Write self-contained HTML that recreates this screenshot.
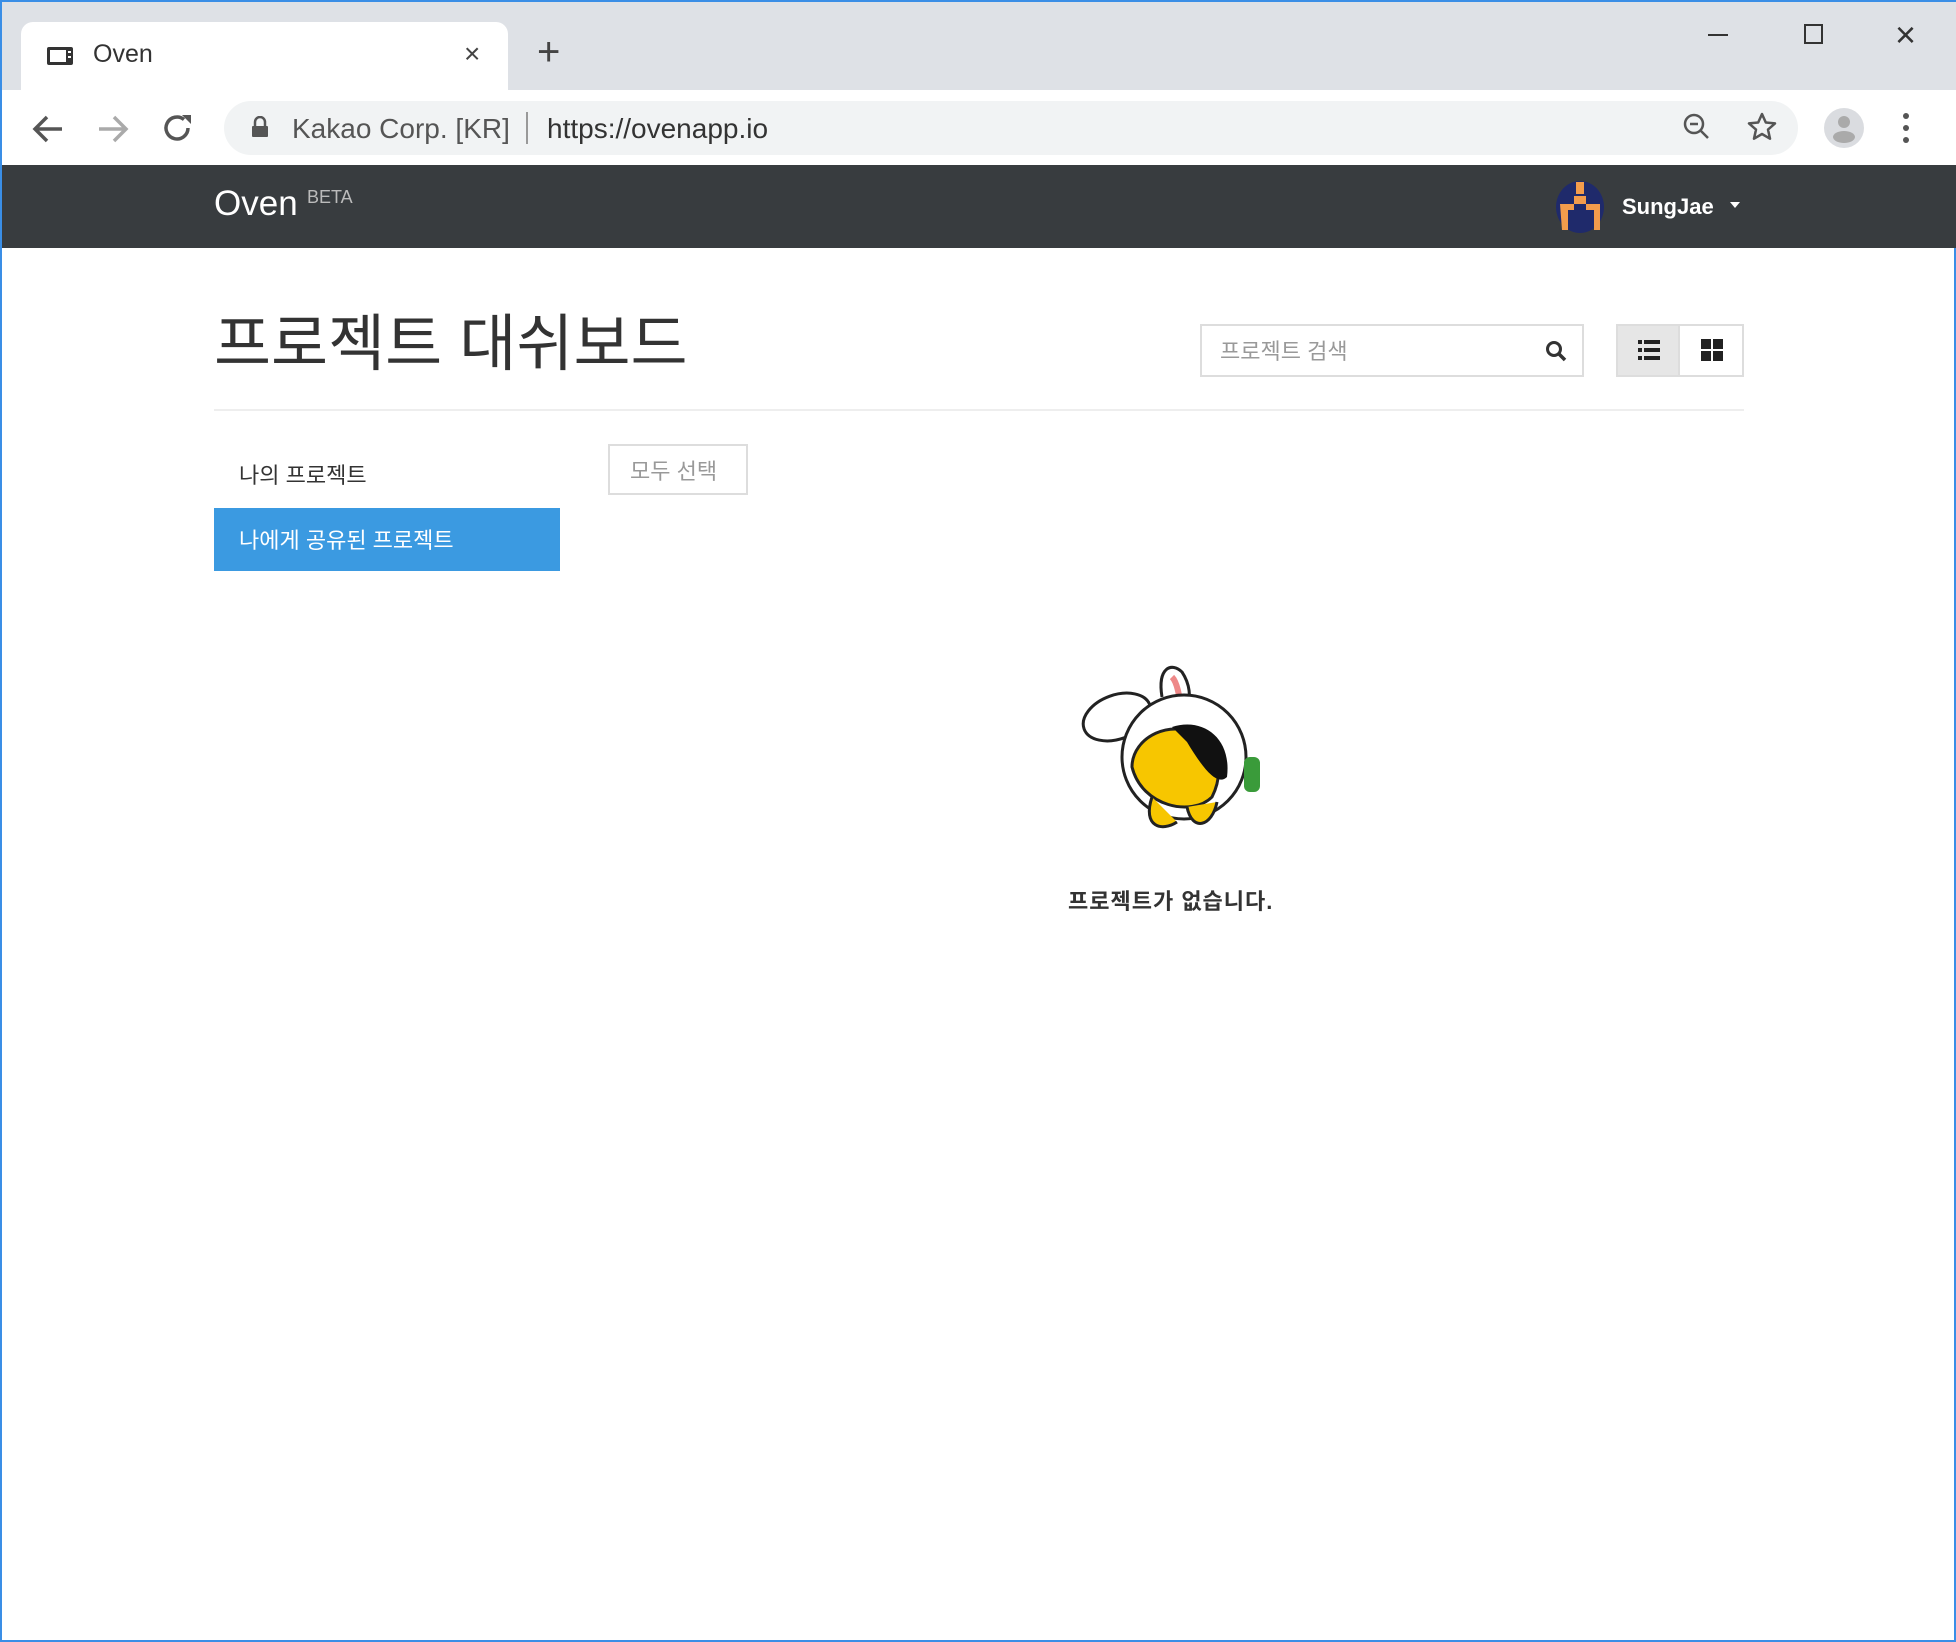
<!DOCTYPE html>
<html><head><meta charset="utf-8"><style>
*{margin:0;padding:0;box-sizing:border-box}
body{width:1956px;height:1642px;background:#fff;font-family:"Liberation Sans","Noto Sans CJK KR",sans-serif;position:relative;overflow:hidden;border:2px solid #3a8ee6}
.abs{position:absolute}
</style></head><body>
<div class="abs" style="left:0;top:0;width:1956px;height:88px;background:#dee1e6"></div>
<div class="abs" style="left:19px;top:20px;width:487px;height:70px;background:#fff;border-radius:12px 12px 0 0"></div>
<svg class="abs" style="left:44px;top:44px" width="28" height="20"><rect x="1" y="1" width="26" height="18" fill="#333" rx="2"/><rect x="4" y="4" width="16" height="12" fill="#fff"/><rect x="22" y="5" width="3" height="2" fill="#fff"/><rect x="22" y="10" width="3" height="2" fill="#fff"/></svg>
<div class="abs" style="left:91px;top:38px;font-size:25px;color:#333">Oven</div>
<div class="abs" style="left:462px;top:36px;font-size:28px;color:#444">×</div>
<div class="abs" style="left:535px;top:28px;font-size:40px;color:#444;font-weight:300">+</div>
<div class="abs" style="left:1706px;top:32px;width:20px;height:2px;background:#333"></div>
<div class="abs" style="left:1802px;top:22px;width:19px;height:20px;border:2px solid #333"></div>
<div class="abs" style="left:1893px;top:12px;font-size:36px;color:#333">×</div>
<div class="abs" style="left:0;top:88px;width:1956px;height:75px;background:#fff"></div>
<svg class="abs" style="left:30px;top:112px" width="32" height="30"><path d="M30 15H4M15 3L3 15l12 12" stroke="#555" stroke-width="3.5" fill="none"/></svg>
<svg class="abs" style="left:95px;top:112px" width="32" height="30"><path d="M2 15h26M17 3l12 12-12 12" stroke="#aaa" stroke-width="3.5" fill="none"/></svg>
<svg class="abs" style="left:160px;top:110px" width="32" height="32"><path d="M26 16a11 11 0 1 1-4-8.5" stroke="#555" stroke-width="3.5" fill="none"/><path d="M20 3h9v9z" fill="#555"/></svg>
<div class="abs" style="left:222px;top:99px;width:1574px;height:54px;background:#f1f3f4;border-radius:27px"></div>
<svg class="abs" style="left:249px;top:114px" width="18" height="22"><path d="M4 10V6a5 5 0 0 1 10 0v4" stroke="#555" stroke-width="2.5" fill="none"/><rect x="1" y="10" width="16" height="11" fill="#555" rx="1"/></svg>
<div class="abs" style="left:290px;top:111px;font-size:28px;color:#555">Kakao Corp. [KR]</div>
<div class="abs" style="left:524px;top:110px;width:2px;height:32px;background:#999"></div>
<div class="abs" style="left:545px;top:111px;font-size:28px;color:#333">https://ovenapp.io</div>
<svg class="abs" style="left:1680px;top:110px" width="30" height="30"><circle cx="12" cy="12" r="9" stroke="#555" stroke-width="2.5" fill="none"/><path d="M8 12h8M19 19l7 7" stroke="#555" stroke-width="2.5"/></svg>
<svg class="abs" style="left:1745px;top:110px" width="30" height="30"><path d="M15 2l3.8 8.5 9.2.9-7 6.2 2 9.1-8-4.7-8 4.7 2-9.1-7-6.2 9.2-.9z" stroke="#555" stroke-width="2.5" fill="none" stroke-linejoin="round"/></svg>
<svg class="abs" style="left:1820px;top:104px" width="44" height="44"><circle cx="22" cy="22" r="20" fill="#dadce0"/><circle cx="22" cy="16" r="6" fill="#aaa"/><ellipse cx="22" cy="31" rx="11" ry="6" fill="#aaa"/></svg>
<svg class="abs" style="left:1900px;top:110px" width="8" height="32"><circle cx="4" cy="4" r="3" fill="#555"/><circle cx="4" cy="16" r="3" fill="#555"/><circle cx="4" cy="28" r="3" fill="#555"/></svg>
<div class="abs" style="left:0;top:163px;width:1956px;height:83px;background:#383c3f"></div>
<div class="abs" style="left:212px;top:182px;font-size:35px;color:#fff">Oven</div>
<div class="abs" style="left:305px;top:185px;font-size:18px;color:#bbb">BETA</div>
<svg class="abs" style="left:1552px;top:178px" width="52" height="54"><ellipse cx="26" cy="27" rx="24" ry="26" fill="#1f2a6b"/><path d="M22 2h8v12h-8zM6 24h14v6h-6v20h-6zM32 24h14v26h-6V30h-8z" fill="#f39c4c"/><rect x="20" y="16" width="12" height="8" fill="#f39c4c"/></svg>
<div class="abs" style="left:1620px;top:192px;font-size:22px;color:#fff;font-weight:bold">SungJae</div>
<div class="abs" style="left:1728px;top:200px;border-left:5px solid transparent;border-right:5px solid transparent;border-top:6px solid #fff"></div>
<div class="abs" style="left:212px;top:306px;font-size:62px;color:#333;line-height:1.2">프로젝트 대쉬보드</div>
<div class="abs" style="left:1198px;top:322px;width:384px;height:53px;border:2px solid #ddd"></div>
<div class="abs" style="left:1218px;top:332px;font-size:22px;color:#999">프로젝트 검색</div>
<svg class="abs" style="left:1543px;top:338px" width="22" height="22"><circle cx="9" cy="9" r="6.5" stroke="#333" stroke-width="3" fill="none"/><path d="M14 14l6 6" stroke="#333" stroke-width="3.5"/></svg>
<div class="abs" style="left:1614px;top:322px;width:128px;height:53px;border:2px solid #ddd;background:#fff"></div>
<div class="abs" style="left:1616px;top:324px;width:62px;height:49px;background:#e6e6e6;border-right:2px solid #ddd"></div>
<svg class="abs" style="left:1636px;top:337px" width="22" height="22"><g fill="#222"><rect x="0" y="1" width="4" height="4"/><rect x="6" y="1" width="16" height="4"/><rect x="0" y="9" width="4" height="4"/><rect x="6" y="9" width="16" height="4"/><rect x="0" y="17" width="4" height="4"/><rect x="6" y="17" width="16" height="4"/></g></svg>
<svg class="abs" style="left:1699px;top:337px" width="22" height="22"><g fill="#222"><rect x="0" y="0" width="10" height="10"/><rect x="12" y="0" width="10" height="10"/><rect x="0" y="12" width="10" height="10"/><rect x="12" y="12" width="10" height="10"/></g></svg>
<div class="abs" style="left:212px;top:407px;width:1530px;height:2px;background:#eee"></div>
<div class="abs" style="left:237px;top:456px;font-size:22px;color:#333">나의 프로젝트</div>
<div class="abs" style="left:606px;top:442px;width:140px;height:51px;border:2px solid #ddd"></div>
<div class="abs" style="left:628px;top:452px;font-size:22px;color:#999">모두 선택</div>
<div class="abs" style="left:212px;top:506px;width:346px;height:63px;background:#3b9ae1"></div>
<div class="abs" style="left:237px;top:521px;font-size:22px;color:#fff">나에게 공유된 프로젝트</div>
<svg class="abs" style="left:1070px;top:655px" width="210" height="200">
<ellipse cx="45" cy="60" rx="35" ry="22" fill="#fff" stroke="#222" stroke-width="3" transform="rotate(-20 45 60)"/>
<path d="M90 40 C85 10,100 5,110 15 C120 30,118 45,115 55" fill="#fff" stroke="#222" stroke-width="3"/>
<path d="M100 20 C105 25,108 40,108 50" stroke="#e88" stroke-width="6" fill="none"/>
<circle cx="112" cy="100" r="62" fill="#fff" stroke="#222" stroke-width="3"/>
<path d="M60 110 C60 80,100 60,130 80 C150 95,150 120,140 140 C120 160,70 150,60 110Z" fill="#f7c600" stroke="#222" stroke-width="3"/>
<path d="M100 70 C130 60,160 80,155 120 C145 130,130 110,115 85Z" fill="#111"/>
<path d="M80 140 C70 170,90 175,105 165 M115 150 C120 175,140 170,145 145" fill="#f7c600" stroke="#222" stroke-width="3"/>
<rect x="172" y="100" width="16" height="35" rx="6" fill="#3a9b3a"/>
</svg>
<div class="abs" style="left:1066px;top:882px;font-size:22px;color:#333;font-weight:bold;letter-spacing:1px">프로젝트가 없습니다.</div>
</body></html>
